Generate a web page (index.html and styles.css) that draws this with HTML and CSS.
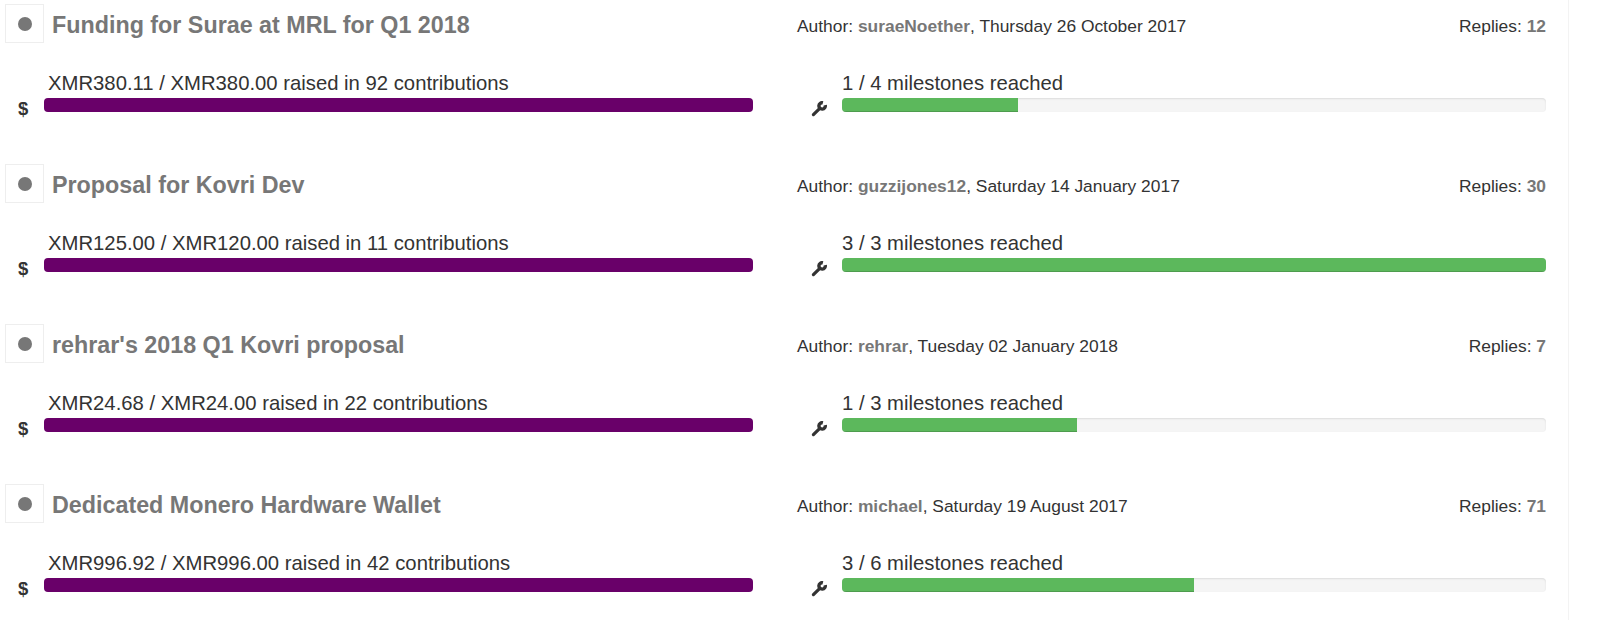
FILE: index.html
```html
<!DOCTYPE html>
<html>
<head>
<meta charset="utf-8">
<link rel="stylesheet" href="styles.css">
</head>
<body>
<div class="list">

  <div class="item">
    <div class="head-left"><span class="bullet"><span class="dot"></span></span><span class="title">Funding for Surae at MRL for Q1 2018</span></div>
    <div class="head-right"><span class="meta">Author: <b>suraeNoether</b>, Thursday 26 October 2017</span><span class="replies">Replies: <b>12</b></span></div>
    <div class="prog prog-funds">
      <div class="label">XMR380.11 / XMR380.00 raised in 92 contributions</div>
      <span class="dollar">$</span>
      <div class="bar"><div class="fill purple" style="width:100%"></div></div>
    </div>
    <div class="prog prog-ms">
      <div class="label">1 / 4 milestones reached</div>
      <svg class="wrench" viewBox="0 0 16 16" width="16" height="16"><path d="M14.2 4.1 A3.2 3.2 0 1 1 11.9 1.8" fill="none" stroke="#333" stroke-width="3.4"/><path d="M8.8 7.3 L2.4 13.6" stroke="#333" stroke-width="3.2" stroke-linecap="round"/></svg>
      <div class="bar track"><div class="fill green" style="width:25%"></div></div>
    </div>
  </div>

  <div class="item">
    <div class="head-left"><span class="bullet"><span class="dot"></span></span><span class="title">Proposal for Kovri Dev</span></div>
    <div class="head-right"><span class="meta">Author: <b>guzzijones12</b>, Saturday 14 January 2017</span><span class="replies">Replies: <b>30</b></span></div>
    <div class="prog prog-funds">
      <div class="label">XMR125.00 / XMR120.00 raised in 11 contributions</div>
      <span class="dollar">$</span>
      <div class="bar"><div class="fill purple" style="width:100%"></div></div>
    </div>
    <div class="prog prog-ms">
      <div class="label">3 / 3 milestones reached</div>
      <svg class="wrench" viewBox="0 0 16 16" width="16" height="16"><path d="M14.2 4.1 A3.2 3.2 0 1 1 11.9 1.8" fill="none" stroke="#333" stroke-width="3.4"/><path d="M8.8 7.3 L2.4 13.6" stroke="#333" stroke-width="3.2" stroke-linecap="round"/></svg>
      <div class="bar track"><div class="fill green" style="width:100%"></div></div>
    </div>
  </div>

  <div class="item">
    <div class="head-left"><span class="bullet"><span class="dot"></span></span><span class="title">rehrar's 2018 Q1 Kovri proposal</span></div>
    <div class="head-right"><span class="meta">Author: <b>rehrar</b>, Tuesday 02 January 2018</span><span class="replies">Replies: <b>7</b></span></div>
    <div class="prog prog-funds">
      <div class="label">XMR24.68 / XMR24.00 raised in 22 contributions</div>
      <span class="dollar">$</span>
      <div class="bar"><div class="fill purple" style="width:100%"></div></div>
    </div>
    <div class="prog prog-ms">
      <div class="label">1 / 3 milestones reached</div>
      <svg class="wrench" viewBox="0 0 16 16" width="16" height="16"><path d="M14.2 4.1 A3.2 3.2 0 1 1 11.9 1.8" fill="none" stroke="#333" stroke-width="3.4"/><path d="M8.8 7.3 L2.4 13.6" stroke="#333" stroke-width="3.2" stroke-linecap="round"/></svg>
      <div class="bar track"><div class="fill green" style="width:33.33%"></div></div>
    </div>
  </div>

  <div class="item">
    <div class="head-left"><span class="bullet"><span class="dot"></span></span><span class="title">Dedicated Monero Hardware Wallet</span></div>
    <div class="head-right"><span class="meta">Author: <b>michael</b>, Saturday 19 August 2017</span><span class="replies">Replies: <b>71</b></span></div>
    <div class="prog prog-funds">
      <div class="label">XMR996.92 / XMR996.00 raised in 42 contributions</div>
      <span class="dollar">$</span>
      <div class="bar"><div class="fill purple" style="width:100%"></div></div>
    </div>
    <div class="prog prog-ms">
      <div class="label">3 / 6 milestones reached</div>
      <svg class="wrench" viewBox="0 0 16 16" width="16" height="16"><path d="M14.2 4.1 A3.2 3.2 0 1 1 11.9 1.8" fill="none" stroke="#333" stroke-width="3.4"/><path d="M8.8 7.3 L2.4 13.6" stroke="#333" stroke-width="3.2" stroke-linecap="round"/></svg>
      <div class="bar track"><div class="fill green" style="width:50%"></div></div>
    </div>
  </div>

</div>
</body>
</html>
```
FILE: styles.css
```css
html, body {
  margin: 0;
  padding: 0;
  background: #fff;
}
body {
  font-family: "Liberation Sans", Arial, sans-serif;
  color: #333;
}
.list {
  width: 1568px;
  min-height: 100vh;
  border-right: 1px solid #f3f3f3;
}
.item {
  display: grid;
  grid-template-columns: 797px 1fr;
  grid-template-rows: 48px auto;
  height: 160px;
  padding-right: 22px;
}
.head-left {
  display: flex;
  align-items: flex-start;
}
.bullet {
  box-sizing: border-box;
  width: 39px;
  height: 39px;
  margin: 4px 0 0 5px;
  border: 1px solid #eee;
  display: flex;
  align-items: center;
  justify-content: center;
}
.dot {
  width: 14px;
  height: 14px;
  border-radius: 50%;
  background: #777;
}
.title {
  margin: 11px 0 0 8px;
  font-size: 23.3px;
  line-height: 28px;
  font-weight: bold;
  color: #777;
  white-space: nowrap;
}
.head-right {
  display: flex;
  justify-content: space-between;
  align-items: flex-start;
  padding-top: 16px;
  font-size: 17.4px;
  line-height: 20px;
  color: #333;
}
.head-right b {
  color: #777;
  font-weight: bold;
}
.prog {
  display: grid;
  grid-template-rows: 22px 14px;
  row-gap: 4px;
  padding-top: 24px;
}
.prog-funds {
  grid-template-columns: 44px 709px;
}
.prog-ms {
  grid-template-columns: 45px 1fr;
}
.label {
  grid-column: 2;
  grid-row: 1;
  font-size: 20.3px;
  line-height: 22px;
  color: #333;
  white-space: nowrap;
}
.prog-funds .label {
  padding-left: 4px;
}
.dollar {
  grid-column: 1;
  grid-row: 2;
  font-size: 18.5px;
  font-weight: bold;
  line-height: 14px;
  height: 14px;
  margin: 4px 0 0 18px;
  color: #333;
}
.wrench {
  grid-column: 1;
  grid-row: 2;
  margin: 3px 0 0 14px;
  display: block;
}
.bar {
  grid-column: 2;
  grid-row: 2;
  height: 14px;
  border-radius: 4px;
  overflow: hidden;
}
.track {
  background: #f5f5f5;
  box-shadow: inset 0 1px 2px rgba(0,0,0,0.1);
}
.fill {
  height: 100%;
}
.purple {
  background: #690069;
}
.green {
  background: #5cb85c;
  box-shadow: inset 0 -1px 0 rgba(0,0,0,0.15);
}
```
